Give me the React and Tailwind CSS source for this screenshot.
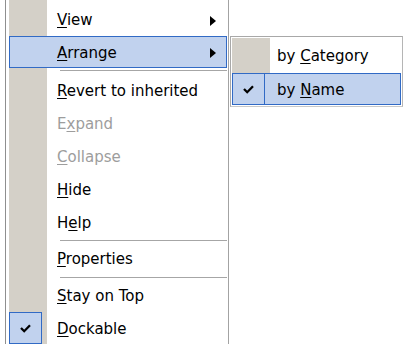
import React from 'react';

const gutter = 'bg-[linear-gradient(to_right,#d4d0c8_0_38px,#ffffff_38px)]';

const Check = () => (
  <svg width="11" height="9" viewBox="0 0 11 9">
    <path d="M1 4 L4.2 7.2 L10 1.2" fill="none" stroke="#000" strokeWidth="2.3" />
  </svg>
);

const Arrow = () => (
  <svg width="6" height="10" viewBox="0 0 6 10" className="ml-auto mr-[10px]">
    <path d="M0 0 L6 5 L0 10 Z" fill="#000" />
  </svg>
);

// label with one underlined mnemonic letter
const Label = ({ text, at }) => (
  <span>
    {text.slice(0, at)}
    <u className="underline-offset-[2px]">{text[at]}</u>
    {text.slice(at + 1)}
  </span>
);

const Row = ({ text, at, h, active, checked, disabled, sub, gw = 'w-[38px]', pl = 'pl-[9px]' }) => (
  <div
    className={
      'flex items-center border ' +
      (active ? 'bg-[#c1d2ee] border-[#316ac5] ' : 'border-transparent ') +
      (disabled ? 'text-[#9d9d9d]' : 'text-black')
    }
    style={{ height: h }}
  >
    <div className={gw + ' h-full shrink-0 flex items-center'}>
      {checked && (
        <div className="w-[33px] h-[calc(100%+2px)] -my-px -ml-px flex items-center justify-center bg-[#c1d2ee] border border-[#316ac5]">
          <Check />
        </div>
      )}
    </div>
    <div className={pl + ' pt-[2px] flex-1 flex items-center'}>
      <Label text={text} at={at} />
      {sub && <Arrow />}
    </div>
  </div>
);

const Sep = ({ h, pt }) => (
  <div style={{ height: h, paddingTop: pt }}>
    <div className="ml-[51px] h-px bg-[#a6a6a6]" />
  </div>
);

export default function App() {
  return (
    <div
      className="w-[408px] h-[352px] bg-white flex items-start overflow-hidden text-[15px] leading-none"
      style={{ fontFamily: '"DejaVu Sans", Tahoma, sans-serif' }}
    >
      {/* main menu */}
      <div className="ml-[5px] w-[224px] border-l border-r border-l-[#8f8f8f] border-r-[#a3a3a3] pl-[3px] pr-px">
        <div className={gutter + ' pt-[3px]'}>
          <Row text="View" at={0} h={33} sub />
          <Row text="Arrange" at={0} h={32} active sub />
          <Sep h={6} pt={2} />
          <Row text="Revert to inherited" at={0} h={33} />
          <Row text="Expand" at={1} h={33} disabled />
          <Row text="Collapse" at={0} h={33} disabled />
          <Row text="Hide" at={0} h={33} />
          <Row text="Help" at={1} h={33} />
          <Sep h={3} pt={1} />
          <Row text="Properties" at={0} h={33} />
          <Sep h={4} pt={2} />
          <Row text="Stay on Top" at={0} h={33} />
          <Row text="Dockable" at={0} h={32} checked />
        </div>
      </div>

      {/* Arrange submenu */}
      <div className="ml-px mt-[36px] w-[173px] border border-t-[#a8a8a8] border-l-[#a8a8a8] border-r-[#b5b5b5] border-b-[#c8c8c8] p-px">
        <div className={gutter}>
          <Row text="by Category" at={3} h={35} gw="w-[37px]" pl="pl-[7px]" />
          <Row text="by Name" at={3} h={32} active checked gw="w-[37px]" pl="pl-[7px]" />
        </div>
      </div>
    </div>
  );
}
